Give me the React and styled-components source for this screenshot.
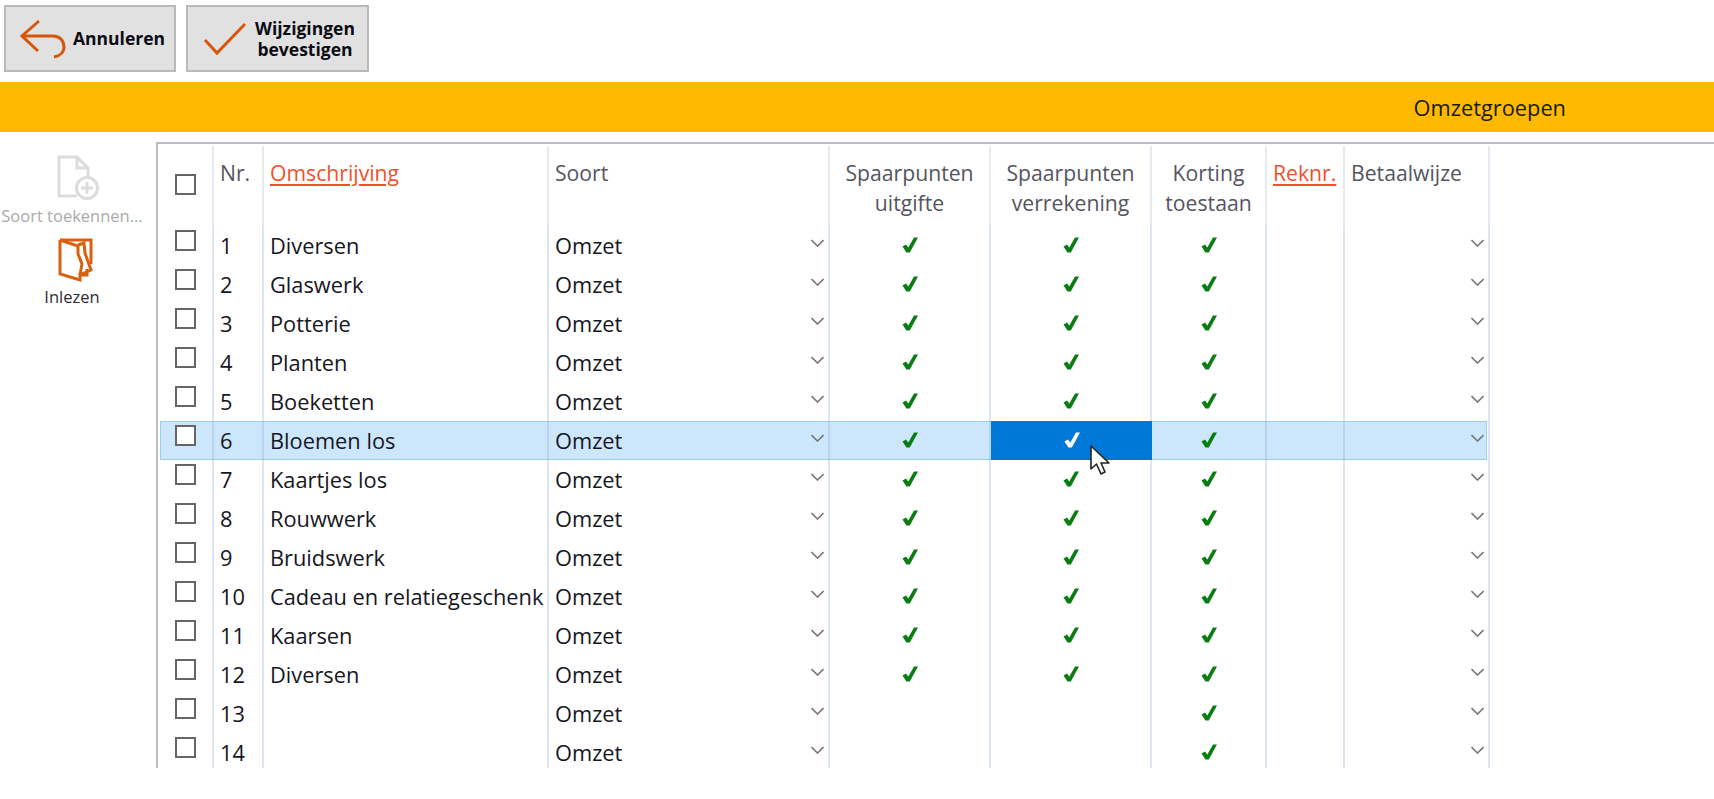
import React from 'react';
import styled, { createGlobalStyle, css } from 'styled-components';

const GlobalStyle = createGlobalStyle`
    html, body {
        margin: 0;
        background: #fff;
        font-family: "Open Sans", "Liberation Sans", sans-serif;
    }
`

const COLUMNS = '56px 50px 285px 281px 161px 161px 115px 78px 145px 1fr';

const rows = [
    { nr: 1, name: 'Diversen', points: true },
    { nr: 2, name: 'Glaswerk', points: true },
    { nr: 3, name: 'Potterie', points: true },
    { nr: 4, name: 'Planten', points: true },
    { nr: 5, name: 'Boeketten', points: true },
    { nr: 6, name: 'Bloemen los', points: true, selected: true },
    { nr: 7, name: 'Kaartjes los', points: true },
    { nr: 8, name: 'Rouwwerk', points: true },
    { nr: 9, name: 'Bruidswerk', points: true },
    { nr: 10, name: 'Cadeau en relatiegeschenk', points: true },
    { nr: 11, name: 'Kaarsen', points: true },
    { nr: 12, name: 'Diversen', points: true },
    { nr: 13, name: '', points: false },
    { nr: 14, name: '', points: false },
];

const BackIcon = () => (
    <svg width="46" height="40" viewBox="0 0 46 40" fill="none" stroke="#d4570c" strokeWidth="3">
        <path d="M19 2 L2 17 L18 32" />
        <path d="M2 17 H33 C40 17 44 22 44 28 C44 33 40 37 34 38" />
    </svg>
);

const ConfirmIcon = () => (
    <svg width="44" height="34" viewBox="0 0 44 34" fill="none" stroke="#d4570c" strokeWidth="3">
        <path d="M2 18 L14 31 L42 2" />
    </svg>
);

const NewFileIcon = () => (
    <svg width="42" height="46" viewBox="0 0 42 46" fill="none" stroke="#dcdcdc" strokeWidth="3">
        <path d="M20 41 H2 V2 H20 L31 13 V22" />
        <path d="M20 2 V13 H31" />
        <circle cx="30" cy="33" r="10.5" />
        <path d="M30 27 V39 M24 33 H36" />
    </svg>
);

const ImportIcon = () => (
    <svg width="35" height="44" viewBox="0 0 35 44" fill="none" stroke="#d9600f" strokeWidth="3">
        <path d="M2 2 H33 V26 M2 2 V36 L22 42 V37 H29 V31" />
        <path d="M2 2 L20 8 L20 16 L24 26 L22 37" />
        <path d="M20 7 L26 5 L27 15 L33 32 L24 36" />
    </svg>
);

const Chevron = ({ className }) => (
    <svg className={className} width="13" height="8" viewBox="0 0 13 8" fill="none" stroke="#777" strokeWidth="1.6">
        <path d="M0.5 1 L6.5 7 L12.5 1" />
    </svg>
);

const CheckMark = styled.svg`
    margin-bottom: 2px;
`

const Check = ({ white }) => (
    <CheckMark width="16" height="16" viewBox="0 0 16 16" fill={white ? '#fff' : '#0a7d12'}>
        <path d="M0.5 9.5 L4 7.5 L6.3 10.5 L12 0.5 L16 0.5 L7.8 15.5 L4.4 15.5 Z" />
    </CheckMark>
);

const Page = styled.div`
    width: 1714px;
    height: 799px;
    overflow: hidden;
    background: #fff;
`

const Toolbar = styled.div`
    display: flex;
    gap: 10px;
    height: 67px;
    padding: 5px 0 10px 4px;
`

const ToolButton = styled.button`
    display: flex;
    align-items: center;
    gap: ${(props) => props.$gap}px;
    box-sizing: border-box;
    width: ${(props) => props.$width}px;
    height: 67px;
    margin: 0;
    padding: ${(props) => props.$padding};
    background: #e1e1e1;
    border: 2px solid #b9b9b9;
    color: #0c0c14;
    font-family: inherit;
    font-size: 17.5px;
    font-weight: 700;
    line-height: 21px;
    text-align: center;
`

const TitleBar = styled.div`
    display: flex;
    align-items: center;
    justify-content: flex-end;
    height: 50px;
    padding-right: 148px;
    background: #ffb900;
    color: #1a1a1a;
    font-size: 21.8px;
`

const Main = styled.div`
    display: flex;
    padding-top: 10px;
`

const Sidebar = styled.div`
    display: flex;
    flex-direction: column;
    align-items: center;
    width: 156px;
    flex-shrink: 0;
    padding-top: 13px;
    box-sizing: border-box;
`

const SideAction = styled.div`
    display: flex;
    flex-direction: column;
    align-items: center;
    height: ${(props) => props.$height}px;
    margin-left: ${(props) => props.$shift}px;
    color: ${(props) => (props.$disabled ? '#a9a9a9' : '#2c2c34')};
    white-space: nowrap;
`

const SideLabel = styled.span`
    margin-top: ${(props) => props.$top}px;
    margin-left: ${(props) => props.$shift}px;
    line-height: 20px;
    font-size: 16.5px;
`

const Grid = styled.div`
    flex: 1;
    height: 626px;
    overflow: hidden;
    box-sizing: border-box;
    border-top: 2px solid #bcbcc4;
    border-left: 2px solid #bcbcc4;
`

const RowGrid = styled.div`
    position: relative;
    display: grid;
    grid-template-columns: ${COLUMNS};
    height: ${(props) => props.$height}px;
`

const Highlight = styled.div`
    position: absolute;
    top: 0;
    left: 2px;
    width: 1327px;
    height: 39px;
    box-sizing: border-box;
    background: #cce6fb;
    border: 1px solid #98cdf7;
`

const Cell = styled.div`
    position: relative;
    display: flex;
    align-items: center;
    box-sizing: border-box;
    padding-left: 6px;
    color: #16161e;
    font-size: 21.8px;
    white-space: nowrap;
    border-right: 2px solid rgba(140, 170, 215, 0.3);

    ${(props) => props.$center && css`
        justify-content: center;
        padding-left: 0;
    `}

    ${(props) => props.$plain && css`
        border-right: 0;
    `}

    ${(props) => props.$active && css`
        z-index: 2;
        background: #0078d7;
        border-right: 0;
    `}
`

const HeadCell = styled.div`
    box-sizing: border-box;
    margin-top: 2px;
    padding: 12px 0 0 6px;
    color: ${(props) => (props.$link ? '#f0512b' : '#55555f')};
    font-size: 21.2px;
    line-height: 30px;
    text-align: ${(props) => (props.$center ? 'center' : 'left')};
    text-decoration: ${(props) => (props.$link ? 'underline' : 'none')};
    text-underline-offset: 3px;
    white-space: pre-line;
    border-right: ${(props) => (props.$plain ? '0' : '2px solid #e4e9f2')};

    ${(props) => props.$center && css`
        padding-left: 0;
    `}
`

const BoxCell = styled.div`
    display: flex;
    justify-content: center;
    box-sizing: border-box;
    position: relative;
    padding-top: ${(props) => props.$top}px;
    margin-top: ${(props) => (props.$head ? 2 : 0)}px;
    border-right: 2px solid ${(props) => (props.$head ? '#e4e9f2' : 'rgba(140, 170, 215, 0.3)')};
`

const Box = styled.div`
    width: 21px;
    height: 21px;
    box-sizing: border-box;
    background: #fff;
    border: 2px solid #666;
`

const DropChevron = styled(Chevron)`
    position: absolute;
    top: 13px;
    right: 4px;
`

const Pointer = styled.svg`
    position: absolute;
    top: 24px;
    left: 99px;
`

const TableRow = ({ row }) => (
    <RowGrid $height={39}>
        {row.selected && <Highlight />}
        <BoxCell $top={4}><Box /></BoxCell>
        <Cell>{row.nr}</Cell>
        <Cell>{row.name}</Cell>
        <Cell>Omzet<DropChevron /></Cell>
        <Cell $center>{row.points && <Check />}</Cell>
        <Cell $center $active={row.selected}>
            {row.points && <Check white={row.selected} />}
            {row.selected && (
                <Pointer width="22" height="32" viewBox="0 0 22 32">
                    <path d="M1 1 V24 L6.5 19 L11 29 L15 27 L11 18 H19 Z" fill="#fff" stroke="#222" strokeWidth="1.6" strokeLinejoin="round" />
                </Pointer>
            )}
        </Cell>
        <Cell $center><Check /></Cell>
        <Cell />
        <Cell><DropChevron /></Cell>
        <Cell $plain />
    </RowGrid>
);

const App = () => {
    return (
        <Page>
            <GlobalStyle />
            <Toolbar>
                <ToolButton $width={172} $gap={7} $padding="0 0 0 14px">
                    <BackIcon />
                    Annuleren
                </ToolButton>
                <ToolButton $width={183} $gap={8} $padding="0 0 0 15px">
                    <ConfirmIcon />
                    <span>Wijzigingen<br />bevestigen</span>
                </ToolButton>
            </Toolbar>
            <TitleBar>Omzetgroepen</TitleBar>
            <Main>
                <Sidebar>
                    <SideAction $disabled $height={83} $shift={0}>
                        <NewFileIcon />
                        <SideLabel $top={5} $shift={-12}>Soort toekennen...</SideLabel>
                    </SideAction>
                    <SideAction $height={70} $shift={-6}>
                        <ImportIcon />
                        <SideLabel $top={5} $shift={-6}>Inlezen</SideLabel>
                    </SideAction>
                </Sidebar>
                <Grid>
                    <RowGrid $height={82}>
                        <BoxCell $head $top={28}><Box /></BoxCell>
                        <HeadCell>Nr.</HeadCell>
                        <HeadCell $link>Omschrijving</HeadCell>
                        <HeadCell>Soort</HeadCell>
                        <HeadCell $center>{'Spaarpunten\nuitgifte'}</HeadCell>
                        <HeadCell $center>{'Spaarpunten\nverrekening'}</HeadCell>
                        <HeadCell $center>{'Korting\ntoestaan'}</HeadCell>
                        <HeadCell $link>Reknr.</HeadCell>
                        <HeadCell>Betaalwijze</HeadCell>
                        <HeadCell $plain />
                    </RowGrid>
                    {rows.map((row) => (
                        <TableRow key={row.nr} row={row} />
                    ))}
                </Grid>
            </Main>
        </Page>
    );
};

export default App;
